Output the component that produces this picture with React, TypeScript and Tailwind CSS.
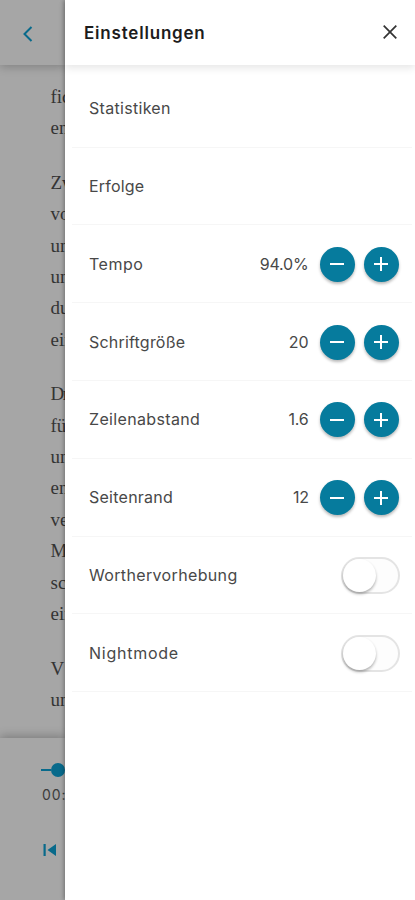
import { useState } from 'react'
import { clsx } from 'clsx'

interface StepperSetting {
  label: string
  tracking: string
  valueTracking: string
  value: number
  step: number
  format: (value: number) => string
}

const paragraphs = [
  ['fic', 'en'],
  ['Zw', 'vo', 'un', 'un', 'du', 'ein'],
  ['Dr', 'für', 'un', 'en', 've', 'M', 'sc', 'ein'],
  ['V', 'un'],
]

const links = [
  { label: 'Statistiken', tracking: 'tracking-[0.3px]' },
  { label: 'Erfolge', tracking: 'tracking-[0.2px]' },
]

const steppers: StepperSetting[] = [
  { label: 'Tempo', tracking: 'tracking-[0.5px]', valueTracking: 'tracking-[-0.2px]', value: 94, step: 0.5, format: (v) => `${v.toFixed(1)}%` },
  { label: 'Schriftgröße', tracking: 'tracking-[0.2px]', valueTracking: 'tracking-[0px]', value: 20, step: 1, format: (v) => `${v}` },
  { label: 'Zeilenabstand', tracking: 'tracking-[0.35px]', valueTracking: 'tracking-[-0.2px]', value: 1.6, step: 0.1, format: (v) => v.toFixed(1) },
  { label: 'Seitenrand', tracking: 'tracking-[0.25px]', valueTracking: 'tracking-[-0.4px]', value: 12, step: 1, format: (v) => `${v}` },
]

const toggles = [
  { label: 'Worthervorhebung', tracking: 'tracking-[0.35px]' },
  { label: 'Nightmode', tracking: 'tracking-[0.75px]' },
]

function Row({ label, tracking, children }: { label: string; tracking: string; children?: React.ReactNode }) {
  return (
    <div className="ml-[7px] mr-[3px] flex h-[77.8px] items-center border-b border-[#f6f6f6] pl-[17px] pr-[13.5px]">
      <span className={clsx('flex-1 whitespace-nowrap text-[16px] text-[#484848]', tracking)}>{label}</span>
      {children}
    </div>
  )
}

function RoundButton({ plus, onClick }: { plus?: boolean; onClick: () => void }) {
  return (
    <button
      onClick={onClick}
      aria-label={plus ? 'Mehr' : 'Weniger'}
      className="flex size-[35px] items-center justify-center rounded-full bg-[#067b9d] shadow-[0_2px_3px_rgba(0,0,0,0.28)]"
    >
      <svg width="16" height="16" viewBox="0 0 16 16" fill="none" stroke="#fff" strokeWidth="2">
        <path d="M1 8h14" />
        {plus && <path d="M8 1v14" />}
      </svg>
    </button>
  )
}

function Stepper({ setting }: { setting: StepperSetting }) {
  const [value, setValue] = useState(setting.value)

  return (
    <Row label={setting.label} tracking={setting.tracking}>
      <span className={clsx('mr-[11px] text-[16px] text-[#484848]', setting.valueTracking)}>{setting.format(value)}</span>
      <div className="mt-px flex gap-[9px]">
        <RoundButton onClick={() => setValue((v) => v - setting.step)} />
        <RoundButton plus onClick={() => setValue((v) => v + setting.step)} />
      </div>
    </Row>
  )
}

function Toggle({ label, tracking }: { label: string; tracking: string }) {
  const [on, setOn] = useState(false)

  return (
    <Row label={label} tracking={tracking}>
      <button
        role="switch"
        aria-checked={on}
        aria-label={label}
        onClick={() => setOn(!on)}
        className={clsx(
          '-mr-[1.5px] mt-px flex h-[37px] w-[59px] items-center rounded-full border-2 border-[#e4e4e4]',
          on ? 'justify-end bg-[#067b9d]' : 'bg-[#fdfdfd]'
        )}
      >
        <span className="size-[33px] rounded-full bg-white shadow-[0_2px_3px_rgba(0,0,0,0.3)]" />
      </button>
    </Row>
  )
}

function Reader() {
  return (
    <div className="flex w-[65px] flex-none flex-col overflow-hidden bg-[#a6a6a6]">
      <header className="relative flex h-[65px] flex-none items-center bg-[#a6a6a6] pl-[23px] pt-[3px] shadow-[0_2px_9px_rgba(0,0,0,0.22)]">
        <svg width="10" height="16" viewBox="0 0 10 16" fill="none" stroke="#086a8b" strokeWidth="2">
          <path d="M8.5 1L1.5 8l7 7" />
        </svg>
      </header>
      <div className="flex flex-1 flex-col gap-[23px] overflow-hidden pl-[50.5px] pt-[16px] font-['Liberation_Serif',serif] text-[19px] leading-[31.4px] text-[#343434]">
        {paragraphs.map((lines, i) => (
          <div key={i}>
            {lines.map((line, j) => (
              <div key={j} className={clsx(line === 'Dr' && 'tracking-[-1.5px]')}>
                {line}
              </div>
            ))}
          </div>
        ))}
      </div>
      <footer className="relative h-[162px] flex-none bg-[#a6a6a6] pt-[25px] shadow-[0_-2px_9px_rgba(0,0,0,0.25)]">
        <div className="ml-[41px] flex items-center">
          <div className="h-[2px] w-[11px] bg-[#086a8b]" />
          <div className="size-[14px] flex-none rounded-full bg-[#086a8b]" />
        </div>
        <div className="ml-[42px] mt-[8px] text-[14px] leading-[20px] tracking-[0.9px] text-[#3c3c3c]">00:00</div>
        <svg className="ml-[43px] mt-[39px]" width="14" height="12" viewBox="0 0 14 12" fill="#086a8b">
          <path d="M.5 0h2.2v12H.5zM13 0v12L4.5 6z" />
        </svg>
      </footer>
    </div>
  )
}

export default function App() {
  return (
    <div className="flex h-[900px] w-[415px] overflow-hidden bg-white font-['Inter',sans-serif]">
      <Reader />
      <aside className="relative flex flex-1 flex-col bg-white shadow-[-1px_0_4px_rgba(0,0,0,0.32)]">
        <header className="flex h-[65px] items-center justify-between pl-[19px] pr-[18px] shadow-[0_3px_8px_rgba(0,0,0,0.1)]">
          <h1 className="mt-[2px] whitespace-nowrap text-[17px] font-semibold tracking-[0.8px] text-[#1c1c1c]">Einstellungen</h1>
          <button aria-label="Schließen" className="mt-[-1px]">
            <svg width="14" height="14" viewBox="0 0 14 14" fill="none" stroke="#333" strokeWidth="1.7">
              <path d="M.7.7l12.6 12.6M13.3.7L.7 13.3" />
            </svg>
          </button>
        </header>
        <div className="pt-[4.9px]">
          {links.map((link) => (
            <Row key={link.label} label={link.label} tracking={link.tracking} />
          ))}
          {steppers.map((setting) => (
            <Stepper key={setting.label} setting={setting} />
          ))}
          {toggles.map((toggle) => (
            <Toggle key={toggle.label} label={toggle.label} tracking={toggle.tracking} />
          ))}
        </div>
      </aside>
    </div>
  )
}
